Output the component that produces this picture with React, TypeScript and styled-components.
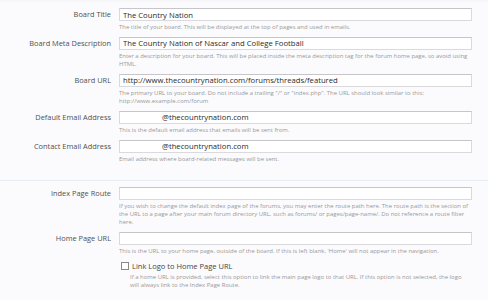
import React from "react";
import styled, { createGlobalStyle } from "styled-components";

const GlobalStyle = createGlobalStyle`
	body {
		margin: 0;
		background: #fbfbfd;
		font-family: "Open Sans", "DejaVu Sans", sans-serif;
	}
`;

const Page = styled.div`
	width: 488px;
	height: 300px;
	overflow: hidden;
	background: #fbfbfd;
	border-top: 2px solid #f6f6f9;
	box-sizing: border-box;
`;

const Section = styled.div<{ $top: number; $bottom: number }>`
	padding: ${(p) => p.$top}px 16px ${(p) => p.$bottom}px 0;
`;

const Separator = styled.div`
	height: 1px;
	background: #e6eef5;
`;

const Row = styled.div`
	display: grid;
	grid-template-columns: 111px 1fr;
	column-gap: 8px;
	padding-bottom: 5.5px;
`;

const Label = styled.label`
	text-align: right;
	font-size: 7.4px;
	line-height: 13px;
	color: #505050;
	white-space: nowrap;
`;

const Field = styled.div`
	display: flex;
	flex-direction: column;
`;

const Input = styled.input<{ $indent?: number }>`
	box-sizing: border-box;
	height: 13px;
	width: 100%;
	margin: 0;
	padding: 0 3px;
	border: 1px solid #dadade;
	border-top-color: #c6c6ca;
	background: #ffffff;
	font-family: "Open Sans", "DejaVu Sans", sans-serif;
	font-size: 7.7px;
	color: #2a2a2a;
	outline: none;
	text-indent: ${(p) => p.$indent ?? 0}px;
`;

const Hint = styled.div<{ $indent?: number }>`
	margin-top: 2px;
	padding-left: ${(p) => p.$indent ?? 0}px;
	font-size: 5.95px;
	line-height: 8.3px;
	color: #999;
`;

const CheckRow = styled.label`
	display: flex;
	align-items: center;
	gap: 3px;
	height: 10px;
	font-size: 7.5px;
	color: #444;
`;

const Box = styled.span`
	box-sizing: border-box;
	width: 8px;
	height: 8px;
	margin-left: 2px;
	border: 1px solid #8a8a8a;
	background: #fff;
`;

type Item = { label: string; value?: string; indent?: number; hint: React.ReactNode };

const top: Item[] = [
	{
		label: "Board Title",
		value: "The Country Nation",
		hint: "The title of your board. This will be displayed at the top of pages and used in emails.",
	},
	{
		label: "Board Meta Description",
		value: "The Country Nation of Nascar and College Football",
		hint: "Enter a description for your board. This will be placed inside the meta description tag for the forum home page, so avoid using HTML.",
	},
	{
		label: "Board URL",
		value: "http://www.thecountrynation.com/forums/threads/featured",
		hint: (
			<>
				The primary URL to your board. Do not include a trailing "/" or "index.php". The URL should look similar to this:
				<br />
				http://www.example.com/forum
			</>
		),
	},
	{
		label: "Default Email Address",
		value: "@thecountrynation.com",
		indent: 39,
		hint: "This is the default email address that emails will be sent from.",
	},
	{
		label: "Contact Email Address",
		value: "@thecountrynation.com",
		indent: 39,
		hint: "Email address where board-related messages will be sent.",
	},
];

const bottom: Item[] = [
	{
		label: "Index Page Route",
		hint: "If you wish to change the default index page of the forums, you may enter the route path here. The route path is the section of the URL to a page after your main forum directory URL, such as forums/ or pages/page-name/. Do not reference a route filter here.",
	},
	{
		label: "Home Page URL",
		hint: "This is the URL to your home page, outside of the board. If this is left blank, 'Home' will not appear in the navigation.",
	},
];

function FormRow({ item }: { item: Item }) {
	return (
		<Row>
			<Label>{item.label}</Label>
			<Field>
				<Input defaultValue={item.value ?? ""} $indent={item.indent} />
				<Hint>{item.hint}</Hint>
			</Field>
		</Row>
	);
}

export default function App() {
	return (
		<>
			<GlobalStyle />
			<Page>
				<Section $top={6} $bottom={11}>
					{top.map((item) => (
						<FormRow key={item.label} item={item} />
					))}
				</Section>
				<Separator />
				<Section $top={6} $bottom={0}>
					{bottom.map((item) => (
						<FormRow key={item.label} item={item} />
					))}
					<Row>
						<span />
						<Field>
							<CheckRow>
								<Box />
								Link Logo to Home Page URL
							</CheckRow>
							<Hint $indent={11}>
								If a home URL is provided, select this option to link the main page logo to that URL. If this option is not selected, the logo will always link to the Index Page Route.
							</Hint>
						</Field>
					</Row>
				</Section>
			</Page>
		</>
	);
}
